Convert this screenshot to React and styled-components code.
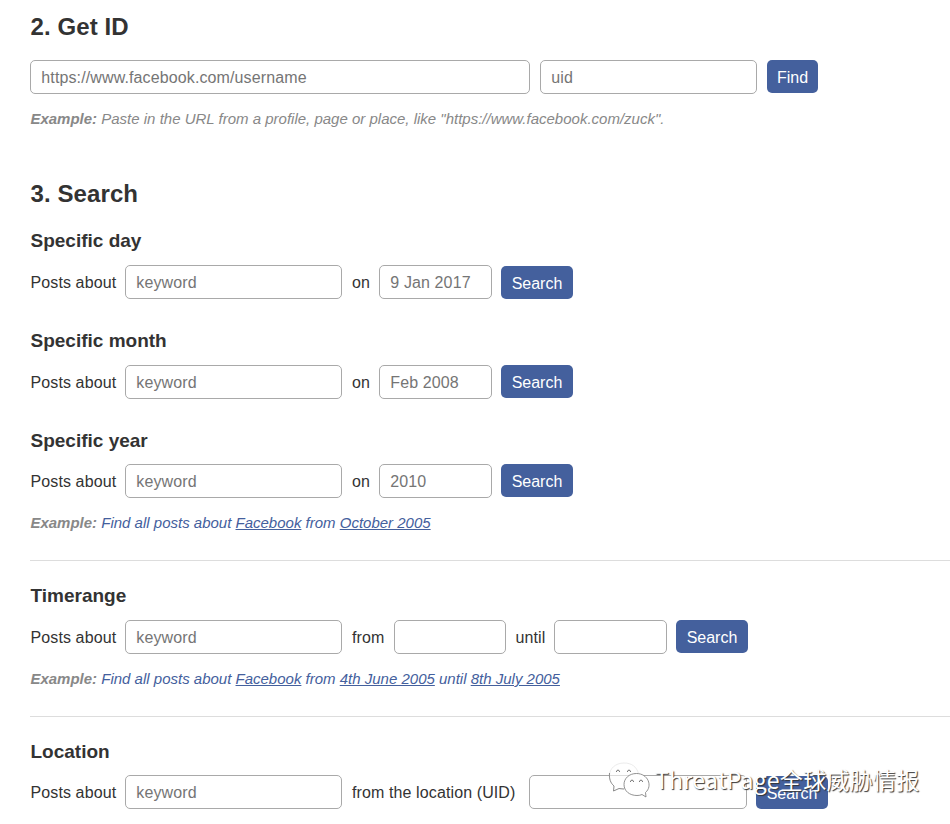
import React from "react";
import styled, { createGlobalStyle } from "styled-components";

const GlobalStyle = createGlobalStyle`
  * { box-sizing: border-box; }
  body {
    margin: 0;
    background: #fff;
    color: #333;
    font-family: "Liberation Sans", Arial, sans-serif;
    font-size: 16px;
    overflow: hidden;
  }
`;

const Page = styled.main`
  position: relative;
  height: 824px;
  padding: 12px 0 0 30px;
  overflow: hidden;
`;

const Title = styled.h2`
  margin: ${(p) => p.$top || 0}px 0 0;
  height: 30px;
  font-size: 24px;
  line-height: 30px;
  letter-spacing: 0.1px;
  text-indent: 0.5px;
  white-space: nowrap;
`;

const Subtitle = styled.h3`
  margin: ${(p) => p.$top}px 0 0;
  height: 24px;
  font-size: 19px;
  line-height: 24px;
  text-indent: 0.5px;
  white-space: nowrap;
`;

const FormRow = styled.form`
  display: flex;
  align-items: flex-start;
  height: 34px;
  margin-top: ${(p) => p.$top}px;
`;

const Label = styled.span`
  flex: none;
  width: ${(p) => p.$width}px;
  padding-left: ${(p) => p.$indent ?? 10}px;
  line-height: 36px;
  letter-spacing: 0.11px;
  white-space: nowrap;
`;

const Field = styled.input`
  flex: none;
  width: ${(p) => p.$width}px;
  height: 34px;
  margin: 0 ${(p) => p.$gap || 0}px 0 0;
  padding: 2px 10px 0 10.3px;
  border: 1px solid #a9a9a9;
  border-radius: 5px;
  background: #fff;
  color: #333;
  font: inherit;
  letter-spacing: 0.12px;
  outline: none;

  &::placeholder {
    color: #757575;
    opacity: 1;
  }
`;

const Button = styled.button`
  flex: none;
  width: ${(p) => p.$width || 72}px;
  height: 33px;
  margin: ${(p) => p.$drop || 0}px 0 0;
  padding: 1px 0 0;
  border: 0;
  border-radius: 5px;
  background: #44609d;
  color: #fff;
  font: inherit;
  line-height: 34px;
`;

const Example = styled.p`
  margin: ${(p) => p.$top}px 0 0;
  height: 20px;
  color: #888;
  font-size: 15px;
  font-style: italic;
  line-height: 20px;
  text-indent: 0.4px;
  white-space: nowrap;
`;

const ExampleText = styled.span`
  color: #44609d;
`;

const Divider = styled.hr`
  height: 1px;
  margin: 27px 0 0;
  border: 0;
  background: #ddd;
`;

const Watermark = styled.div`
  position: absolute;
  left: 608px;
  top: 760px;
  display: flex;
  align-items: center;
  height: 38px;
`;

const WatermarkIcon = styled.svg`
  width: 44px;
  height: 38px;
  margin: 2px 3px 0 0;
`;

const WatermarkText = styled.span`
  color: #fff;
  font-family: "Noto Sans CJK SC", sans-serif;
  font-size: 23px;
  line-height: 38px;
  letter-spacing: 0.3px;
  white-space: nowrap;
  text-shadow: 1px 1px 1px #333;
`;

const KeywordField = () => (
  <>
    <Label $width={95} $indent={0.5}>Posts about</Label>
    <Field $width={217} placeholder="keyword" />
  </>
);

const dateForms = [
  { title: "Specific day", date: "9 Jan 2017", top: 20, rowTop: 12, drop: 1 },
  { title: "Specific month", date: "Feb 2008", top: 30, rowTop: 12, drop: 0 },
  { title: "Specific year", date: "2010", top: 30, rowTop: 11, drop: 0 },
];

export default function App() {
  return (
    <>
      <GlobalStyle />
      <Page>
        <Title>2. Get ID</Title>
        <FormRow $top={18}>
          <Field $width={500} $gap={10} placeholder="https://www.facebook.com/username" />
          <Field $width={217} $gap={10} placeholder="uid" />
          <Button type="button" $width={51}>Find</Button>
        </FormRow>
        <Example $top={15}>
          <b>Example:</b> Paste in the URL from a profile, page or place, like "https://www.facebook.com/zuck".
        </Example>

        <Title $top={50}>3. Search</Title>
        {dateForms.map((f) => (
          <React.Fragment key={f.title}>
            <Subtitle $top={f.top}>{f.title}</Subtitle>
            <FormRow $top={f.rowTop}>
              <KeywordField />
              <Label $width={37}>on</Label>
              <Field $width={113} $gap={9} placeholder={f.date} />
              <Button type="button" $drop={f.drop}>Search</Button>
            </FormRow>
          </React.Fragment>
        ))}
        <Example $top={15}>
          <b>Example:</b>{" "}
          <ExampleText>Find all posts about <u>Facebook</u> from <u>October 2005</u></ExampleText>
        </Example>
        <Divider />

        <Subtitle $top={23}>Timerange</Subtitle>
        <FormRow $top={12}>
          <KeywordField />
          <Label $width={52}>from</Label>
          <Field $width={112} />
          <Label $width={48} $indent={9.5}>until</Label>
          <Field $width={113} $gap={9} />
          <Button type="button">Search</Button>
        </FormRow>
        <Example $top={15}>
          <b>Example:</b>{" "}
          <ExampleText>
            Find all posts about <u>Facebook</u> from <u>4th June 2005</u> until <u>8th July 2005</u>
          </ExampleText>
        </Example>
        <Divider />

        <Subtitle $top={23}>Location</Subtitle>
        <FormRow $top={11}>
          <KeywordField />
          <Label $width={187}>from the location (UID)</Label>
          <Field $width={218} $gap={9} />
          <Button type="button" $drop={1}>Search</Button>
        </FormRow>

        <Watermark>
          <WatermarkIcon viewBox="0 0 44 38" fill="none">
            <path d="M6 25 L5.500 30 L11 27.500 Q13.500 28.500 16.500 28 C16 20 22 12.500 30.500 12.500 C28.500 5.500 23.500 2 16 2 C7.500 2 1.500 7.500 1.500 14.500 Q1.500 21 6 25Z" fill="#fff" fillOpacity=".6" stroke="#ddd" strokeWidth=".6" />
            <path d="M1.500 12 C1 18 2.500 22 6 25 L5.500 30 L11 27.500 L16 28" stroke="#777" strokeWidth=".8" />
            <path d="M28.500 12.500 C21 12.500 16 17.500 16 23.500 C16 30 21.500 34.500 29 34.500 Q32 34.500 34 33.500 L38 36 L37.500 31.500 C45 25 40 12.500 28.500 12.500Z" fill="#fff" stroke="#777" strokeWidth=".8" />
            <path d="M8.500 11 C8 8.500 12 8.500 11.500 11 M19.500 11 C19 8.500 23 8.500 22.500 11 M22.500 21 C22 18.500 26 18.500 25.500 21 M31.500 21 C31 18.500 35 18.500 34.500 21" stroke="#666" strokeWidth=".9" />
          </WatermarkIcon>
          <WatermarkText>ThreatPage全球威胁情报</WatermarkText>
        </Watermark>
      </Page>
    </>
  );
}
